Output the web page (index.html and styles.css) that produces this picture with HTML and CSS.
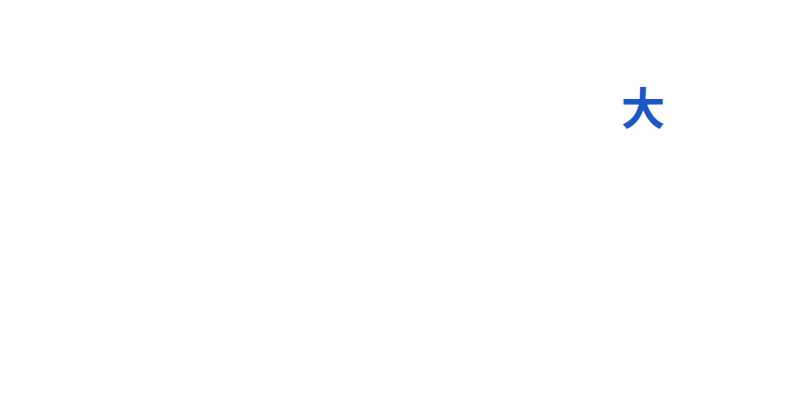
FILE: index.html
```html
<!DOCTYPE html>
<html lang="zh">
<head>
<meta charset="utf-8">
<link rel="stylesheet" href="styles.css">
</head>
<body>
<main class="page">
  <span class="glyph">大</span>
</main>
</body>
</html>
```
FILE: styles.css
```css
html, body {
  margin: 0;
  padding: 0;
  background: #ffffff;
}
.page {
  width: 800px;
  height: 400px;
  box-sizing: border-box;
  display: flex;
  align-items: flex-start;
  padding: 84px 0 0 621px;
}
.glyph {
  font-family: "Noto Sans CJK SC", "Noto Sans CJK JP", sans-serif;
  font-weight: 700;
  font-size: 44px;
  line-height: 1;
  color: #1b57c6;
}
```
